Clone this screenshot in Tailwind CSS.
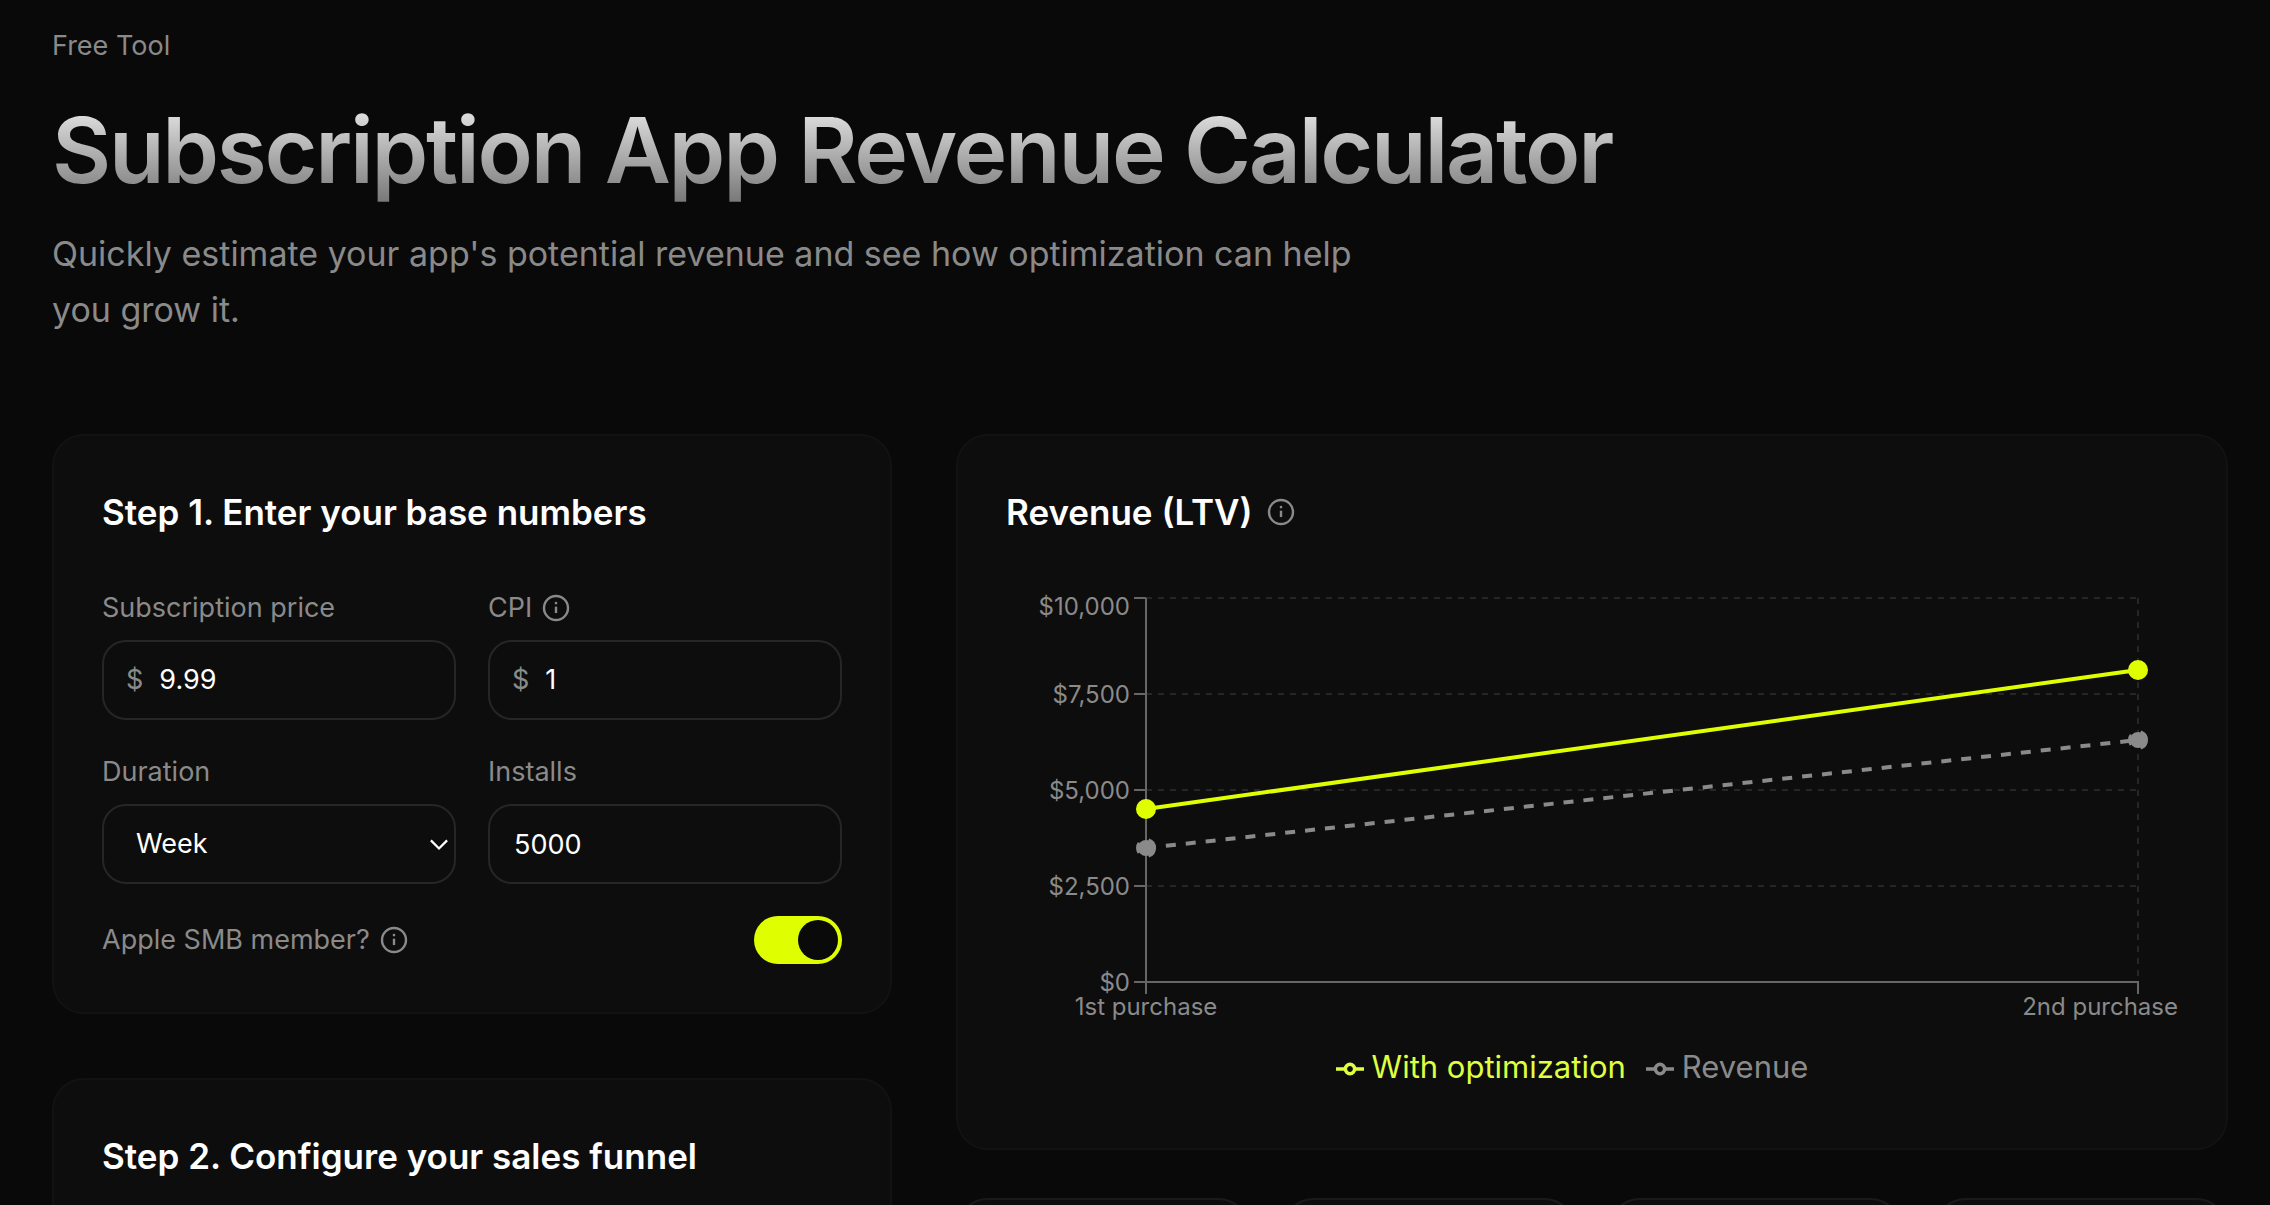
<!DOCTYPE html>
<html lang="en">
  <head>
    <meta charset="UTF-8" />
    <meta name="viewport" content="width=device-width, initial-scale=1.0" />
    <title>Subscription App Revenue Calculator</title>
    <script src="https://cdn.jsdelivr.net/npm/@tailwindcss/browser@4"></script>
  </head>
  <body
    class="min-h-screen bg-[#090909] font-['Inter',sans-serif] text-[#8a8a8a]"
  >
    <!-- Shared info icon -->
    <svg class="hidden" aria-hidden="true">
      <symbol id="info" viewBox="0 0 24 24">
        <circle cx="12" cy="12" r="9" fill="none" stroke="currentColor" stroke-width="1.8" />
        <path d="M12 11v4.8" fill="none" stroke="currentColor" stroke-width="1.8" />
        <circle cx="12" cy="8.3" r="1" fill="currentColor" />
      </symbol>
    </svg>

    <header class="px-[52px] pt-[26px]">
      <p class="text-[27px] leading-10">Free Tool</p>
      <h1
        class="mt-5 bg-linear-to-b from-white to-[#6c6c6c] bg-clip-text text-[91px] leading-[128px] font-semibold tracking-tight text-transparent"
      >
        Subscription App Revenue Calculator
      </h1>
      <p class="mt-3 max-w-[1344px] text-[34px] leading-14">
        Quickly estimate your app's potential revenue and see how optimization
        can help you grow it.
      </p>
    </header>

    <main class="mt-24 grid grid-cols-[35fr_53fr] items-start gap-16 pr-[42px] pl-[52px]">
      <div class="flex flex-col gap-16">
        <section class="rounded-4xl border-2 border-[#121212] bg-[#0d0d0d] p-12">
          <h2 class="text-[35px] leading-14 font-semibold text-white">
            Step 1. Enter your base numbers
          </h2>
          <form class="mt-12 grid grid-cols-2 gap-8 text-[27px] leading-10">
            <div>
              <label for="price">Subscription price</label>
              <div class="mt-3 flex h-20 items-center rounded-3xl border-2 border-[#262626] px-[22px]">
                <span>$</span>
                <input id="price" type="text" value="9.99" class="ml-4 w-full min-w-0 text-white outline-none" />
              </div>
            </div>
            <div>
              <div class="flex items-center gap-2">
                <label for="cpi">CPI</label>
                <svg class="size-8"><use href="#info" /></svg>
              </div>
              <div class="mt-3 flex h-20 items-center rounded-3xl border-2 border-[#262626] px-[22px]">
                <span>$</span>
                <input id="cpi" type="text" value="1" class="ml-4 w-full min-w-0 text-white outline-none" />
              </div>
            </div>
            <div>
              <label for="duration">Duration</label>
              <div class="relative mt-3">
                <select
                  id="duration"
                  class="block h-20 w-full appearance-none rounded-3xl border-2 border-[#262626] bg-transparent px-8 text-white outline-none"
                >
                  <option>Week</option>
                  <option>Month</option>
                  <option>Year</option>
                </select>
                <svg
                  class="pointer-events-none absolute top-1/2 right-2 size-[18px] -translate-y-1/2 text-white"
                  viewBox="0 0 20 20"
                  fill="none"
                  stroke="currentColor"
                  stroke-width="2.5"
                >
                  <path d="M1 6l9 9 9-9" />
                </svg>
              </div>
            </div>
            <div>
              <label for="installs">Installs</label>
              <input
                id="installs"
                type="text"
                value="5000"
                class="mt-3 block h-20 w-full rounded-3xl border-2 border-[#262626] px-6 text-white outline-none"
              />
            </div>
            <div class="col-span-2 flex h-12 items-center justify-between">
              <div class="flex items-center gap-2">
                <label for="smb">Apple SMB member?</label>
                <svg class="size-8"><use href="#info" /></svg>
              </div>
              <input
                id="smb"
                type="checkbox"
                role="switch"
                checked
                class="h-12 w-[88px] appearance-none rounded-full bg-[#333333] p-1 before:block before:size-10 before:rounded-full before:bg-[#0a0a0a] checked:bg-[#dfff00] checked:before:ml-10"
              />
            </div>
          </form>
        </section>

        <section class="rounded-4xl border-2 border-[#121212] bg-[#0d0d0d] p-12">
          <h2 class="text-[35px] leading-14 font-semibold text-white">
            Step 2. Configure your sales funnel
          </h2>
        </section>
      </div>

      <div class="flex flex-col gap-12">
        <section class="rounded-4xl border-2 border-[#121212] bg-[#0d0d0d] p-12">
          <div class="flex items-center gap-3">
            <h2 class="text-[35px] leading-14 font-semibold text-white">
              Revenue (LTV)
            </h2>
            <svg class="size-8"><use href="#info" /></svg>
          </div>

          <svg
            class="mt-12 block w-full"
            viewBox="0 0 1172 448"
            role="img"
            aria-label="Revenue with and without optimization"
          >
            <!-- Grid -->
            <g stroke="#262626" stroke-width="2" stroke-dasharray="6 6">
              <path d="M140 10H1132" />
              <path d="M140 106H1132" />
              <path d="M140 202H1132" />
              <path d="M140 298H1132" />
              <path d="M1132 10V394" />
            </g>
            <!-- Axes -->
            <path
              d="M140 10V406M128 10H140M128 106H140M128 202H140M128 298H140M128 394H1132V406"
              fill="none"
              stroke="#666666"
              stroke-width="2"
            />
            <g fill="#8a8a8a" font-size="24" text-anchor="end">
              <text x="124" y="27">$10,000</text>
              <text x="124" y="115">$7,500</text>
              <text x="124" y="211">$5,000</text>
              <text x="124" y="307">$2,500</text>
              <text x="124" y="403">$0</text>
              <text x="140" y="427" text-anchor="middle">1st purchase</text>
              <text x="1172" y="427">2nd purchase</text>
            </g>
            <!-- Revenue -->
            <g stroke="#8a8a8a" stroke-width="4" stroke-dasharray="10 10" fill="#8a8a8a">
              <path d="M140 260L1132 152" />
              <circle cx="140" cy="260" r="8" />
              <circle cx="1132" cy="152" r="8" />
            </g>
            <!-- With optimization -->
            <g stroke="#dfff00" stroke-width="4" fill="#dfff00">
              <path d="M140 221L1132 82" />
              <circle cx="140" cy="221" r="8" />
              <circle cx="1132" cy="82" r="8" />
            </g>
          </svg>

          <ul class="flex h-16 items-center justify-center gap-5 pr-10 pb-0.5 text-[31px] leading-12">
            <li class="flex items-center gap-2 text-[#dfff40]">
              <svg class="mt-1 size-7" viewBox="0 0 32 32" fill="none" stroke="currentColor" stroke-width="4">
                <path d="M0 16h10.67a5.33 5.33 0 1 1 10.66 0H32M21.33 16a5.33 5.33 0 1 1-10.66 0" />
              </svg>
              With optimization
            </li>
            <li class="flex items-center gap-2">
              <svg class="mt-1 size-7" viewBox="0 0 32 32" fill="none" stroke="currentColor" stroke-width="4">
                <path d="M0 16h10.67a5.33 5.33 0 1 1 10.66 0H32M21.33 16a5.33 5.33 0 1 1-10.66 0" />
              </svg>
              Revenue
            </li>
          </ul>
        </section>

        <div class="grid grid-cols-4 gap-8">
          <div class="h-40 rounded-4xl border-2 border-[#1a1a1a] bg-[#0d0d0d]"></div>
          <div class="h-40 rounded-4xl border-2 border-[#1a1a1a] bg-[#0d0d0d]"></div>
          <div class="h-40 rounded-4xl border-2 border-[#1a1a1a] bg-[#0d0d0d]"></div>
          <div class="h-40 rounded-4xl border-2 border-[#1a1a1a] bg-[#0d0d0d]"></div>
        </div>
      </div>
    </main>
  </body>
</html>
